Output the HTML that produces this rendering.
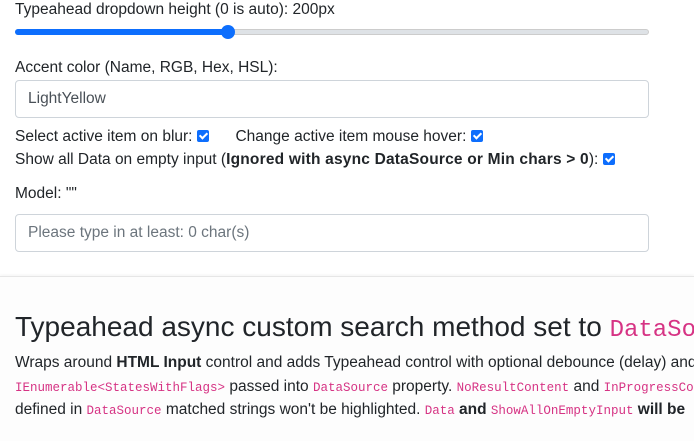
<!DOCTYPE html>
<html><head><style>
*{box-sizing:border-box;margin:0;padding:0}
html,body{width:694px;height:441px;overflow:hidden}
body{background:#fff;font-family:"Liberation Sans",sans-serif;color:#212529;font-size:15.5px;position:relative}
.a{position:absolute;white-space:nowrap}
.clip{overflow:hidden;right:0}
.inp{position:absolute;left:15px;width:634px;border:1px solid #ced4da;border-radius:4px;padding-left:12px;display:flex;align-items:center;font-size:15.5px}
.cb{display:inline-block;width:12px;height:12px;background:#0d6efd;border-radius:2px;vertical-align:-1px;position:relative;margin-left:5px}
.cb:after{content:"";position:absolute;left:4px;top:1px;width:3px;height:6px;border:solid #fff;border-width:0 2px 2px 0;transform:rotate(45deg)}
code{font-family:"Liberation Mono",monospace;color:#d63384;font-size:12.5px}
</style></head><body>
<div class="a" style="left:15px;top:1px">Typeahead dropdown height (0 is auto): 200px</div>
<div class="a" style="left:15px;top:29px;width:634px;height:6px;background:#dee2e6;border-radius:3px;border:1px solid #ccc"></div>
<div class="a" style="left:15px;top:29px;width:215px;height:6px;background:#0d6efd;border-radius:3px"></div>
<div class="a" style="left:221px;top:25px;width:14px;height:14px;background:#0d6efd;border-radius:50%"></div>
<div class="a" style="left:15px;top:59px">Accent color (Name, RGB, Hex, HSL):</div>
<div class="inp" style="top:80px;height:38px;color:#495057">LightYellow</div>
<div class="a" style="left:15px;top:128px">Select active item on blur:<span class="cb"></span><span style="display:inline-block;width:26px"></span>Change active item mouse hover:<span class="cb"></span></div>
<div class="a" style="left:15px;top:151px">Show all Data on empty input (<b style="letter-spacing:.2px">Ignored with async DataSource or Min chars &gt; 0</b>):<span class="cb"></span></div>
<div class="a" style="left:15px;top:185px">Model: ""</div>
<div class="inp" style="top:214px;height:38px;color:#6c757d">Please type in at least: 0 char(s)</div>
<div class="a" style="left:0;top:276px;width:694px;height:165px;background:#fdfdfd;border-top:1px solid #e6e6e6;box-shadow:0 -1px 3px rgba(0,0,0,.05)"></div>
<div class="a clip" style="left:15px;top:311px;font-size:28px">Typeahead async custom search method set to <code style="font-size:24px">DataSource</code></div>
<div class="a clip" style="left:15px;top:354px">Wraps around <b>HTML Input</b> control and adds Typeahead control with optional debounce (delay) and</div>
<div class="a clip" style="left:15px;top:378px"><code>IEnumerable&lt;StatesWithFlags&gt;</code> passed into <code>DataSource</code> property. <code>NoResultContent</code> and <code>InProgressContent</code></div>
<div class="a clip" style="left:15px;top:401px">defined in <code>DataSource</code> matched strings won't be highlighted. <code>Data</code> <b>and</b> <code>ShowAllOnEmptyInput</code> <b>will be</b></div>
</body></html>
